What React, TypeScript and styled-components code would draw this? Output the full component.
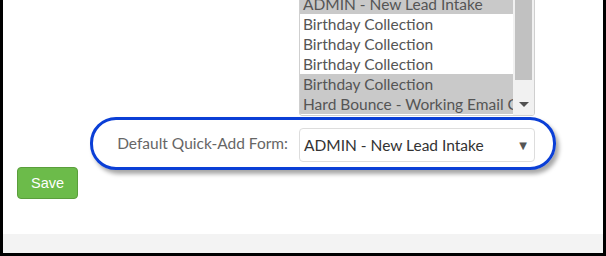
import React from "react";
import styled, { createGlobalStyle } from "styled-components";

const Global = createGlobalStyle`
  html, body { margin: 0; padding: 0; background: #fff; }
  body { font-family: "Lato", "Liberation Sans", sans-serif; }
`;

const Frame = styled.div`
  width: 606px;
  height: 256px;
  box-sizing: border-box;
  border-left: 3px solid #000;
  border-right: 3px solid #000;
  border-bottom: 3px solid #000;
  overflow: hidden;
  display: flex;
  flex-direction: column;
  background: #fff;
`;

const Content = styled.div`
  flex: 1;
  display: flex;
  flex-direction: column;
`;

const ListBox = styled.div`
  margin-top: -7px;
  margin-left: 296px;
  width: 236px;
  height: 123px;
  box-sizing: border-box;
  border: 1px solid #cfcfcf;
  border-radius: 0 0 3px 3px;
  display: flex;
  overflow: hidden;
  background: #fff;
`;

const Options = styled.div`
  flex: 1;
  min-width: 0;
  display: flex;
  flex-direction: column;
`;

const Option = styled.div<{ $selected?: boolean }>`
  height: 20px;
  line-height: 20px;
  padding-left: 3px;
  font-size: 15.5px;
  color: #555;
  white-space: nowrap;
  overflow: hidden;
  background: ${(p) => (p.$selected ? "#c9c9c9" : "#fff")};
`;

const ScrollTrack = styled.div`
  width: 21px;
  background: #f1f1f1;
  display: flex;
  flex-direction: column;
  align-items: center;
  box-sizing: border-box;
`;

const Thumb = styled.div`
  width: 17px;
  height: 86px;
  background: #c1c1c1;
`;

const ScrollArrow = styled.div`
  margin-top: auto;
  margin-bottom: 8px;
  width: 0;
  height: 0;
  border-left: 5px solid transparent;
  border-right: 5px solid transparent;
  border-top: 5px solid #505050;
`;

const FormRow = styled.div`
  position: relative;
  margin-top: 12px;
  display: grid;
  grid-template-columns: 285px 236px;
  column-gap: 11px;
  align-items: center;
  height: 34px;

  &::before {
    content: "";
    position: absolute;
    left: 87px;
    top: -11px;
    width: 466px;
    height: 53px;
    box-sizing: border-box;
    border: 3px solid #0b3fd6;
    border-radius: 26px;
    box-shadow: 3px 4px 4px rgba(0, 0, 0, 0.35);
    pointer-events: none;
  }
`;

const Label = styled.label`
  text-align: right;
  font-size: 15.5px;
  color: #666;
  padding-bottom: 4px;
`;

const SelectBox = styled.div`
  height: 34px;
  box-sizing: border-box;
  border: 1px solid #ddd;
  border-radius: 4px;
  display: flex;
  align-items: center;
  padding: 0 7px 0 4px;
  font-size: 15.5px;
  color: #333;
  background: #fff;
`;

const SelectText = styled.span`
  flex: 1;
`;

const Caret = styled.span`
  font-size: 10px;
  color: #555;
  font-family: "DejaVu Sans", sans-serif;
`;

const SaveButton = styled.button`
  margin-top: 5px;
  margin-left: 14px;
  width: 61px;
  height: 32px;
  box-sizing: border-box;
  background: #6cbb4a;
  border: 1px solid #5a9e3c;
  border-radius: 4px;
  color: #fff;
  font-family: "Liberation Sans", Arial, sans-serif;
  font-size: 14.5px;
  padding: 0;
  align-self: flex-start;
`;

const Footer = styled.div`
  height: 19px;
  background: #f3f3f3;
`;

const options = [
  { label: "ADMIN - New Lead Intake", selected: true },
  { label: "Birthday Collection" },
  { label: "Birthday Collection" },
  { label: "Birthday Collection" },
  { label: "Birthday Collection", selected: true },
  { label: "Hard Bounce - Working Email Collection", selected: true },
];

export default function App() {
  return (
    <>
      <Global />
      <Frame>
        <Content>
          <ListBox>
            <Options>
              {options.map((o, i) => (
                <Option key={i} $selected={o.selected}>
                  {o.label}
                </Option>
              ))}
            </Options>
            <ScrollTrack>
              <Thumb />
              <ScrollArrow />
            </ScrollTrack>
          </ListBox>
          <FormRow>
            <Label>Default Quick-Add Form:</Label>
            <SelectBox>
              <SelectText>ADMIN - New Lead Intake</SelectText>
              <Caret>▼</Caret>
            </SelectBox>
          </FormRow>
          <SaveButton>Save</SaveButton>
        </Content>
        <Footer />
      </Frame>
    </>
  );
}
